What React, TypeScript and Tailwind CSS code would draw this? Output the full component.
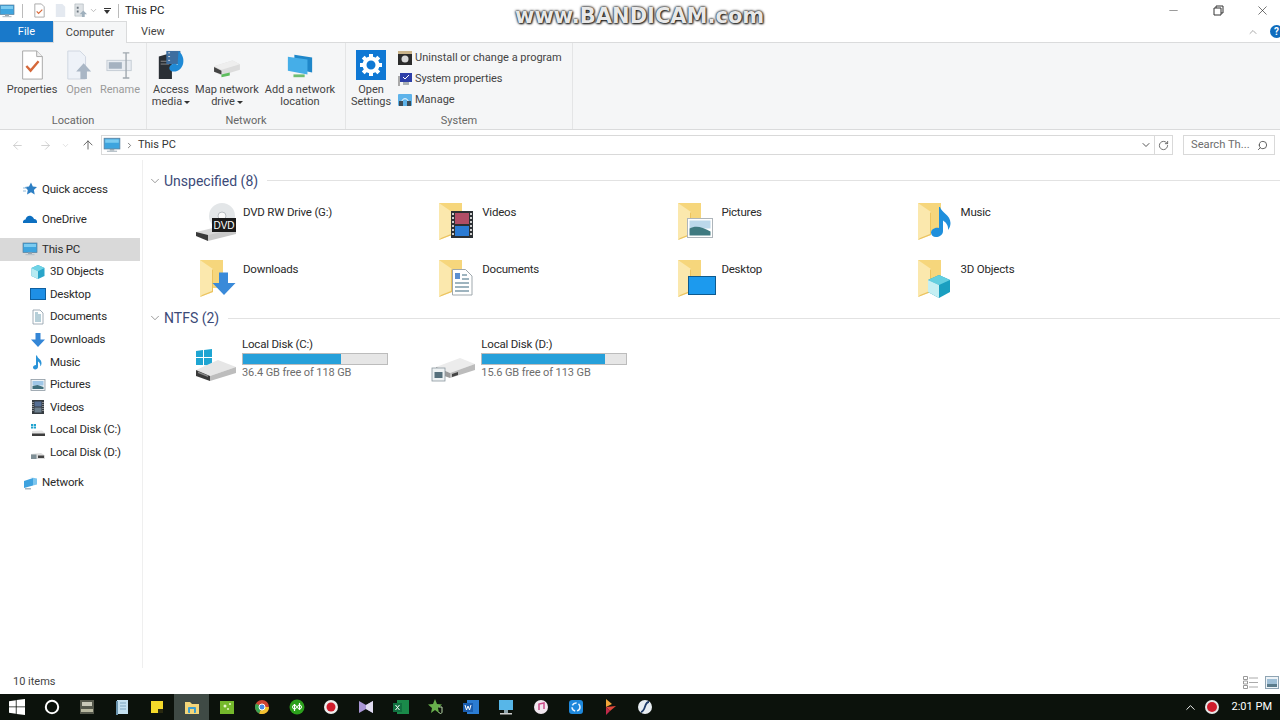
import type { ReactNode } from "react"
import { ArrowLeft, ArrowRight, ArrowUp, ChevronDown, ChevronRight, ChevronUp, RotateCw, Search, Minus, X } from "lucide-react"

const Ic = ({ s = 16, children, vb = 16 }: { s?: number; vb?: number; children: ReactNode }) => (
  <svg width={s} height={s} viewBox={`0 0 ${vb} ${vb}`} className="shrink-0 block">{children}</svg>
)

const Monitor = ({ s = 16 }: { s?: number }) => (
  <Ic s={s}>
    <rect x="1" y="2" width="14" height="9.5" fill="#3ea4de" stroke="#5a7f9c" strokeWidth=".7" />
    <rect x="2" y="3" width="12" height="3" fill="#7ccbf0" />
    <rect x="6" y="11.5" width="4" height="1.5" fill="#9aa7b0" />
    <rect x="3.5" y="13" width="9" height="1.2" fill="#b9c3ca" />
  </Ic>
)

const Cube = ({ s = 16 }: { s?: number }) => (
  <Ic s={s}>
    <path d="M8 1l6.500 3v8L8 15l-6.500-3V4z" fill="#2aa5c9" />
    <path d="M8 1l6.500 3L8 7.200 1.500 4z" fill="#6fd3e6" />
    <path d="M1.500 4L8 7.200V15l-6.500-3z" fill="#b5eaf2" />
  </Ic>
)

const DesktopIc = ({ s = 16 }: { s?: number }) => (
  <Ic s={s}>
    <rect x=".5" y="2.5" width="15" height="11" fill="#1e8fe6" stroke="#0f5f9f" />
  </Ic>
)

const DocIc = ({ s = 16 }: { s?: number }) => (
  <Ic s={s}>
    <path d="M3 1h7l3 3v11H3z" fill="#fff" stroke="#8a9aa6" strokeWidth=".8" />
    <path d="M5 4h3M5 6h6M5 8h6M5 10h6M5 12h6" stroke="#5c93a8" strokeWidth=".9" />
  </Ic>
)

const DownIc = ({ s = 16 }: { s?: number }) => (
  <Ic s={s}>
    <path d="M5.500 1h5v6.500H15L8 15 1 7.500h4.500z" fill="#3486d6" />
  </Ic>
)

const NoteIc = ({ s = 16 }: { s?: number }) => (
  <Ic s={s}>
    <path d="M7 1.500c.5 3 4.500 3.500 4.500 7.500 0 1.500-.5 2.500-1.200 3.300.3-3-1.300-4.300-2.300-4.800v5.500c0 1.600-1.500 2.500-2.800 2.500S3 14.600 3 13.300s1.400-2.300 3-2.300V1.500z" fill="#2a93d8" />
  </Ic>
)

const PicIc = ({ s = 16 }: { s?: number }) => (
  <Ic s={s}>
    <rect x="1" y="2.500" width="14" height="11" fill="#eef2f5" stroke="#8d99a3" strokeWidth=".8" />
    <rect x="2.500" y="4" width="11" height="4.500" fill="#9fc6e6" />
    <path d="M2.500 12V9l5-1 6 2v2z" fill="#3f6f7c" />
  </Ic>
)

const FilmIc = ({ s = 16 }: { s?: number }) => (
  <Ic s={s}>
    <rect x="2" y="1" width="12" height="14" fill="#353b40" />
    <rect x="4.500" y="2.500" width="7" height="5" fill="#566f94" />
    <rect x="4.500" y="8.500" width="7" height="5" fill="#6d7f8d" />
    <path d="M3 3v10M13 3v10" stroke="#d8d8d8" strokeWidth="1" strokeDasharray="1 1" />
  </Ic>
)

const DiskC = ({ s = 16 }: { s?: number }) => (
  <Ic s={s}>
    <path d="M1 2h2.200v2H1zM3.800 2H6v2H3.800zM1 4.600h2.200v2H1zM3.800 4.600H6v2H3.800z" fill="#21a3cf" />
    <path d="M2 9l10-.5 3 2.500v3H2z" fill="#e5e5e5" />
    <rect x="2" y="11.500" width="13" height="2.500" fill="#3d3d3d" />
  </Ic>
)

const DiskD = ({ s = 16 }: { s?: number }) => (
  <Ic s={s}>
    <path d="M1 9l10-1 4 2.500V14H1z" fill="#dcdcdc" />
    <rect x="8" y="10.500" width="6" height="2.500" fill="#444" />
    <rect x="1" y="9.500" width="5.500" height="4.500" fill="#7f8f96" />
  </Ic>
)

const NetIc = ({ s = 16 }: { s?: number }) => (
  <Ic s={s}>
    <path d="M2 6l9-3v7.500L2 13z" fill="#3ea2df" />
    <path d="M7 2l8 1.500v6L11 10.500V3z" fill="#7cc5ee" />
    <path d="M3 13h6v1.500H3z" fill="#a8b5bd" />
  </Ic>
)

const Folder = ({ children }: { children?: ReactNode }) => (
  <svg width="48" height="48" viewBox="0 0 48 48" className="shrink-0 block">
    <path d="M8 3h23v28H8z" fill="#f6d67c" />
    <path d="M8 3l13 9v23l-13 5z" fill="#fbe8ad" />
    <path d="M21 12v23l-13 5 2-2 10-4V13z" fill="#ecc35f" />
    {children}
  </svg>
)

const DvdDrive = () => (
  <svg width="48" height="48" viewBox="0 0 48 48" className="shrink-0 block">
    <circle cx="30" cy="16" r="13" fill="#e3e6e8" />
    <circle cx="30" cy="16" r="4" fill="#fafafa" stroke="#b8bdc1" />
    <path d="M4 32l34-8v9L16 40z" fill="#d8d8d8" />
    <path d="M4 32l12 3v6L4 36z" fill="#3a3a3a" />
    <path d="M16 35l28-6v5L16 41z" fill="#c8c8c8" />
    <rect x="20" y="18" width="24" height="14" fill="#1b1b1b" />
    <text x="32" y="29" textAnchor="middle" fontSize="10" fill="#fff" fontFamily="'Liberation Sans', sans-serif">DVD</text>
  </svg>
)

const DriveC = () => (
  <svg width="48" height="48" viewBox="0 0 48 48" className="shrink-0 block">
    <path d="M4 11l7-1v7H4zM12 10l8-1v8h-8zM4 18h7v7H4zM12 18h8v8l-8-1z" fill="#1ea5d2" />
    <path d="M4 30l22-10 18 7-26 9z" fill="#e6e6e6" />
    <path d="M4 30l14 6v5L4 36z" fill="#3a3a3a" />
    <path d="M6 31.500l10 4v1.500l-10-4z" fill="#8a8a8a" />
    <path d="M18 36l26-9v6L18 41z" fill="#bdbdbd" />
  </svg>
)

const DriveD = () => (
  <svg width="48" height="48" viewBox="0 0 48 48" className="shrink-0 block">
    <path d="M5 27l24-9 15 6-25 9z" fill="#ececec" />
    <path d="M5 27l14 6v5L5 33z" fill="#9b9b9b" />
    <path d="M19 33l25-9v6l-25 8z" fill="#bcbcbc" />
    <path d="M21 34l6-2v3l-6 2z" fill="#444" />
    <rect x="1" y="28" width="13" height="13" fill="#eef2f3" stroke="#8a979e" strokeWidth=".8" />
    <rect x="3.500" y="32" width="8" height="6" fill="#56707c" />
  </svg>
)

const Label = ({ name }: { name: string }) => (
  <span className="block pt-[3px] text-[11.5px] leading-[18px] tracking-[-0.2px] text-[#2a2a2a]">{name}</span>
)

const items: { name: string; icon: ReactNode }[] = [
  { name: "DVD RW Drive (G:)", icon: <DvdDrive /> },
  {
    name: "Videos",
    icon: (
      <Folder>
        <rect x="20" y="11" width="22" height="27" fill="#2c3034" />
        <rect x="24" y="13" width="14" height="11" fill="#b14d66" />
        <rect x="24" y="26" width="14" height="10" fill="#2b7bd4" />
        <path d="M22 13v23M40 13v23" stroke="#cfcfcf" strokeWidth="2" strokeDasharray="2 2" />
      </Folder>
    ),
  },
  {
    name: "Pictures",
    icon: (
      <Folder>
        <rect x="17.500" y="18.500" width="25" height="19" fill="#fff" stroke="#aeb5ba" />
        <rect x="19.500" y="20.500" width="21" height="8" fill="#bcd8ea" />
        <path d="M19.500 35.500v-7c6-3 12-2 21 3v4z" fill="#3f7a80" />
      </Folder>
    ),
  },
  {
    name: "Music",
    icon: (
      <Folder>
        <path d="M30 7c1 5 10.500 8 10.500 16 0 3-1 5-2.500 7 .5-5-2.500-8-5-9.500V31c0 4-4 6-7 6s-5-2-5-4.500 3.500-5.500 8-4.500V7z" fill="#1f8fdc" />
      </Folder>
    ),
  },
  {
    name: "Downloads",
    icon: (
      <Folder>
        <path d="M27 15.500h9V26h7.500L32 38 20.500 26H27z" fill="#3a8ad9" />
      </Folder>
    ),
  },
  {
    name: "Documents",
    icon: (
      <Folder>
        <path d="M21.500 12.500h13l6.500 6.500v19H21.500z" fill="#fff" stroke="#9fa8ad" />
        <path d="M24 16h5v6h-5z" fill="#5c8fd0" />
        <path d="M31 18h5M31 22h7M24 26h14M24 30h14M24 34h14" stroke="#7f9cab" strokeWidth="1.300" />
      </Folder>
    ),
  },
  {
    name: "Desktop",
    icon: (
      <Folder>
        <rect x="18.500" y="19.500" width="27" height="18" fill="#1c9aee" stroke="#0d5a8f" />
      </Folder>
    ),
  },
  {
    name: "3D Objects",
    icon: (
      <Folder>
        <path d="M29 18l11 5v12l-11 6-11-6V23z" fill="#1a9fc0" />
        <path d="M29 18l11 5-11 5-11-5z" fill="#63cfe0" />
        <path d="M18 23l11 5v13l-11-6z" fill="#c5eff3" />
      </Folder>
    ),
  },
]

const GroupHead = ({ title }: { title: string }) => (
  <div className="flex h-[20px] items-center pl-[5px]">
    <ChevronDown size={14} strokeWidth={1} className="text-[#555] shrink-0" />
    <span className="ml-[2px] text-[14px] leading-[20px] text-[#3c4a78]">{title}</span>
    <div className="ml-[9px] h-px flex-1 bg-[#e2e2e2]" />
  </div>
)

const Disk = ({ name, free, pct, icon }: { name: string; free: string; pct: number; icon: ReactNode }) => (
  <div className="flex w-[239.3px] items-start">
    <div className="mt-[5px]">{icon}</div>
    <div className="ml-[2px] w-[146px]">
      <div className="text-[11.5px] leading-[18px] tracking-[-0.2px] text-[#2a2a2a]">{name}</div>
      <div className="h-[12px] border border-[#bcbcbc] bg-[#e6e6e6]">
        <div className="h-full bg-[#26a0da]" style={{ width: `${pct}%` }} />
      </div>
      <div className="text-[11px] leading-[16px] tracking-[-0.1px] text-[#6d6d6d]">{free}</div>
    </div>
  </div>
)

const NavRow = ({ icon, name, sub, active, className = "" }: { icon: ReactNode; name: string; sub?: boolean; active?: boolean; className?: string }) => (
  <div className={`flex h-[22.6px] items-center ${sub ? "pl-[30px]" : "pl-[22px]"} ${active ? "bg-[#d9d9d9]" : ""} ${className}`}>
    {icon}
    <span className="ml-[4px] text-[11.5px] tracking-[-0.2px] text-[#2a2a2a]">{name}</span>
  </div>
)

const RibbonBtn = ({ icon, lines, w, off, caret }: { icon: ReactNode; lines: string[]; w: string; off?: boolean; caret?: boolean }) => (
  <div className={`flex flex-col items-center ${w}`}>
    <div className="flex h-[30px] items-end justify-center">{icon}</div>
    <div className={`mt-[4px] text-center text-[11px] leading-[12px] ${off ? "text-[#9a9a9a]" : "text-[#444]"}`}>
      {lines.map((l, i) => (
        <div key={l} className="whitespace-nowrap">
          {l}
          {caret && i === lines.length - 1 && <span className="ml-[2px] inline-block h-0 w-0 border-x-[3px] border-t-[3px] border-x-transparent border-t-[#333] align-middle" />}
        </div>
      ))}
    </div>
  </div>
)

const GroupLabel = ({ text }: { text: string }) => (
  <div className="absolute inset-x-0 bottom-[1px] text-center text-[11px] leading-[14px] text-[#666]">{text}</div>
)

const TaskIc = ({ children, active }: { children: ReactNode; active?: boolean }) => (
  <div className={`flex h-full w-[34.9px] items-center justify-center ${active ? "bg-[#3f4a45]" : ""}`}>{children}</div>
)

const T = ({ children }: { children: ReactNode }) => <Ic s={18} vb={18}>{children}</Ic>

export default function App() {
  return (
    <div className="relative flex h-[720px] w-[1280px] flex-col overflow-hidden bg-white font-['Roboto','Liberation_Sans',sans-serif]">
      {/* title bar */}
      <div className="flex h-[21px] items-center">
        <div className="-ml-[1px]"><Monitor /></div>
        <div className="ml-[7px] h-[14px] w-px bg-[#bbb]" />
        <div className="ml-[9px]">
          <Ic s={15}>
            <path d="M3 1h7l3 3v11H3z" fill="#fff" stroke="#a9a9a9" />
            <path d="M5 9l2 2 4-4" fill="none" stroke="#d96a3a" strokeWidth="1.300" />
          </Ic>
        </div>
        <div className="ml-[6px]">
          <Ic s={15}><path d="M3 1h7l3 3v11H3z" fill="#e4e9f0" /></Ic>
        </div>
        <div className="ml-[5px]">
          <Ic s={15}>
            <path d="M2 1h9v13H2z" fill="#dfe3e6" stroke="#a8b0b6" strokeWidth=".6" />
            <path d="M4 4h2v2H4zM4 8h2v2H4z" fill="#6d7780" />
            <path d="M11 8l4 4h-2.500v3h-3v-3H7z" fill="#9fb0bd" />
          </Ic>
        </div>
        <ChevronDown size={9} className="ml-[1px] text-[#aaa]" />
        <div className="ml-[5px] flex w-[8px] flex-col items-center">
          <div className="mb-[1px] h-px w-[7px] bg-[#333]" />
          <div className="h-0 w-0 border-x-[3.5px] border-t-[4px] border-x-transparent border-t-[#333]" />
        </div>
        <div className="ml-[7px] h-[14px] w-px bg-[#bbb]" />
        <span className="ml-[6px] text-[11.5px] text-[#222]">This PC</span>
        <div className="ml-auto flex items-center">
          <Minus size={13} strokeWidth={1} className="mr-[33px] text-[#444]" />
          <svg width="11" height="11" viewBox="0 0 11 11" className="mr-[31px]">
            <path d="M3 3V1h7v7H8M1 3h7v7H1z" fill="none" stroke="#333" />
          </svg>
          <X size={15} strokeWidth={1} className="mr-[10px] text-[#222]" />
        </div>
      </div>

      {/* tabs */}
      <div className="flex h-[22px] items-stretch border-b border-[#dadbdc]">
        <div className="flex w-[53px] items-center justify-center bg-[#1979ca] pt-[1px] text-[11px] text-white">File</div>
        <div className="-mb-px flex w-[74px] items-center justify-center border-x border-t border-[#dadbdc] bg-[#f5f6f7] pt-[1px] text-[11px] text-[#444]">Computer</div>
        <div className="flex w-[52px] items-center justify-center pt-[1px] text-[11px] text-[#444]">View</div>
        <div className="ml-auto flex items-center">
          <ChevronUp size={12} className="mr-[11px] text-[#aaa]" />
          <div className="-mr-[3px] flex h-[13px] w-[13px] items-center justify-center rounded-full bg-[#0f6cbd] text-[10px] font-bold leading-none text-white">?</div>
        </div>
      </div>

      {/* ribbon */}
      <div className="flex h-[87px] border-b border-[#dadbdc] bg-[#f5f6f7]">
        <div className="relative flex w-[147px] border-r border-[#e4e5e6] pl-[6px] pt-[7px]">
          <RibbonBtn
            w="w-[52px]"
            lines={["Properties"]}
            icon={
              <svg width="30" height="30" viewBox="0 0 32 32">
                <path d="M6 1h15l6 6v24H6z" fill="#fff" stroke="#a5a5a5" />
                <path d="M21 1v6h6" fill="#eee" stroke="#a5a5a5" />
                <path d="M10 17l4.500 5L23 12" fill="none" stroke="#d5683a" strokeWidth="2.500" />
              </svg>
            }
          />
          <RibbonBtn
            w="w-[42px]"
            off
            lines={["Open"]}
            icon={
              <svg width="28" height="30" viewBox="0 0 30 32">
                <path d="M3 1h13l6 6v24H3z" fill="#eef2f8" stroke="#cdd5e0" />
                <path d="M20 14l8 9h-4.500v8h-7v-8H12z" fill="#a9b6c5" />
              </svg>
            }
          />
          <RibbonBtn
            w="w-[40px]"
            off
            lines={["Rename"]}
            icon={
              <svg width="28" height="30" viewBox="0 0 30 32">
                <rect x="1" y="11" width="26" height="11" fill="#e9edf2" stroke="#c4ccd4" />
                <rect x="3" y="13" width="14" height="7" fill="#a5b2c0" />
                <path d="M18 3h7M18 30h7M21.500 3v27" stroke="#a0a8af" strokeWidth="1.500" fill="none" />
              </svg>
            }
          />
          <GroupLabel text="Location" />
        </div>
        <div className="relative flex w-[199px] border-r border-[#e4e5e6] pl-[2px] pt-[7px]">
          <RibbonBtn
            w="w-[44px]"
            caret
            lines={["Access", "media"]}
            icon={
              <svg width="32" height="30" viewBox="0 0 32 32">
                <path d="M3 7l14-4v28H3z" fill="#2a2f35" />
                <path d="M5 12h9M5 15h9" stroke="#8d8d8d" />
                <rect x="11" y="1" width="15" height="14" fill="#3d6ea0" />
                <path d="M13 3h2M13 7h2M13 11h2" stroke="#ddd" />
                <path d="M24 1c4 3 6 8 5 13-1 5-5 9-10 9-4 0-6-3-4-6s6-3 8-1z" fill="#1f8ad6" />
              </svg>
            }
          />
          <RibbonBtn
            w="w-[68px]"
            caret
            lines={["Map network", "drive"]}
            icon={
              <svg width="32" height="24" viewBox="0 0 32 26">
                <path d="M2 11l20-6 8 4v6L10 21 2 17z" fill="#dcdcdc" />
                <path d="M2 11l8 4 20-6-8-4z" fill="#eee" />
                <path d="M2 12l8 4v4l-8-3z" fill="#444" />
                <path d="M10 20l9-2v3l-9 2z" fill="#5ebd5e" />
              </svg>
            }
          />
          <RibbonBtn
            w="w-[78px]"
            lines={["Add a network", "location"]}
            icon={
              <svg width="30" height="28" viewBox="0 0 30 30">
                <path d="M9 3l19 3v16L9 18z" fill="#1f87c9" />
                <path d="M2 5l21 3v16L2 20z" fill="#45aee8" />
                <path d="M8 24h12v3H8z" fill="#6fbe72" />
              </svg>
            }
          />
          <GroupLabel text="Network" />
        </div>
        <div className="relative flex w-[227px] border-r border-[#e4e5e6] pt-[7px]">
          <RibbonBtn
            w="w-[50px]"
            lines={["Open", "Settings"]}
            icon={
              <svg width="30" height="30" viewBox="0 0 30 30">
                <rect width="30" height="30" fill="#0f78d4" />
                <circle cx="15" cy="15" r="6.500" fill="none" stroke="#fff" strokeWidth="4" />
                <path d="M15 4v4M15 22v4M4 15h4M22 15h4M7.200 7.200l2.800 2.800M20 20l2.800 2.800M22.800 7.200L20 10M10 20l-2.800 2.800" stroke="#fff" strokeWidth="4" />
              </svg>
            }
          />
          <div className="ml-[1px] flex flex-col gap-[5px]">
            <div className="flex h-[16px] items-center">
              <Ic>
                <rect x="1" y="2" width="14" height="13" fill="#2b2b2b" />
                <rect x="1" y="1" width="14" height="3" fill="#c9b38a" />
                <circle cx="8" cy="9" r="3.500" fill="#d8d8d8" />
              </Ic>
              <span className="ml-[2px] whitespace-nowrap text-[11px] text-[#444]">Uninstall or change a program</span>
            </div>
            <div className="flex h-[16px] items-center">
              <Ic>
                <rect x="3" y="2" width="12" height="9" fill="#2d3fa8" />
                <path d="M6 6l2 2 4-4" stroke="#fff" fill="none" />
                <rect x="1" y="5" width="2" height="10" fill="#a9a9a9" />
                <rect x="6" y="11" width="6" height="3" fill="#a9b0b5" />
              </Ic>
              <span className="ml-[2px] whitespace-nowrap text-[11px] tracking-[-0.1px] text-[#444]">System properties</span>
            </div>
            <div className="flex h-[16px] items-center">
              <Ic>
                <rect x="1" y="2" width="14" height="12" rx="1" fill="#5eb3ea" />
                <rect x="2" y="9" width="4" height="5" fill="#3e4d58" />
                <rect x="10" y="9" width="4" height="5" fill="#3e4d58" />
                <path d="M5 9c0-3 6-3 6 0" fill="none" stroke="#fff" />
              </Ic>
              <span className="ml-[2px] whitespace-nowrap text-[11px] text-[#444]">Manage</span>
            </div>
          </div>
          <GroupLabel text="System" />
        </div>
      </div>

      {/* address row */}
      <div className="flex h-[30px] items-center">
        <ArrowLeft size={13} strokeWidth={1.5} className="ml-[11px] text-[#c8c8c8]" />
        <ArrowRight size={13} strokeWidth={1.5} className="ml-[15px] text-[#c8c8c8]" />
        <ChevronDown size={9} strokeWidth={1.5} className="ml-[9px] text-[#ccc]" />
        <ArrowUp size={14} strokeWidth={1.5} className="ml-[11px] text-[#555]" />
        <div className="ml-[6px] flex h-[20px] w-[1072px] items-center border border-[#d9d9d9] pl-[1px]">
          <Monitor s={18} />
          <ChevronRight size={9} className="ml-[4px] text-[#555]" />
          <span className="ml-[4px] pt-[1px] text-[11px] text-[#333]">This PC</span>
          <ChevronDown size={12} strokeWidth={2} className="ml-auto mr-[1px] text-[#555]" />
          <div className="ml-[1px] h-full w-px bg-[#d9d9d9]" />
          <RotateCw size={11} className="mx-[3px] text-[#666]" />
        </div>
        <div className="ml-[10px] flex h-[20px] w-[92px] items-center border border-[#d9d9d9] pl-[7px]">
          <span className="pt-[1px] text-[11.2px] text-[#6d6d6d]">Search Th...</span>
          <Search size={11} className="ml-auto mr-[6px] -scale-x-100 text-[#555]" />
        </div>
      </div>

      {/* body */}
      <div className="flex h-[508px]">
        <div className="w-[143px] border-r border-[#efefef] pr-[2px] pt-[18px]">
          <NavRow
            name="Quick access"
            icon={
              <Ic s={16}>
                <path d="M9 1.500l1.800 4 4.200.5-3.100 3 .8 4.500L9 11.200 5 13.500l.8-4.500-3-3 4.200-.5z" fill="#2d7fc4" />
                <path d="M1 7h4M1 10h3" stroke="#8fb8d9" />
              </Ic>
            }
          />
          <NavRow
            className="mt-[7.400px]"
            name="OneDrive"
            icon={
              <Ic s={16}>
                <path d="M1 12c-.5-2 1-3.500 2.500-3.500C4 6 6.500 4 9 5c1.500.5 2.500 1.500 3 3 2 0 3.500 1.500 3 4z" fill="#0d6fc0" />
              </Ic>
            }
          />
          <NavRow className="mt-[7.400px]" active name="This PC" icon={<Monitor />} />
          <NavRow sub name="3D Objects" icon={<Cube />} />
          <NavRow sub name="Desktop" icon={<DesktopIc />} />
          <NavRow sub name="Documents" icon={<DocIc />} />
          <NavRow sub name="Downloads" icon={<DownIc />} />
          <NavRow sub name="Music" icon={<NoteIc />} />
          <NavRow sub name="Pictures" icon={<PicIc />} />
          <NavRow sub name="Videos" icon={<FilmIc />} />
          <NavRow sub name="Local Disk (C:)" icon={<DiskC />} />
          <NavRow sub name="Local Disk (D:)" icon={<DiskD />} />
          <NavRow className="mt-[7.400px]" name="Network" icon={<NetIc />} />
        </div>
        <div className="flex-1 pt-[10.500px]">
          <GroupHead title="Unspecified (8)" />
          <div className="mt-[9.500px] grid grid-cols-[repeat(4,239.2px)] gap-y-[5px] pl-[49px]">
            {items.map((it) => (
              <div key={it.name} className="flex h-[51.500px] items-start">
                {it.icon}
                <div className="ml-[3px]"><Label name={it.name} /></div>
              </div>
            ))}
          </div>
          <GroupHead title="NTFS (2)" />
          <div className="mt-[7px] flex pl-[49px]">
            <Disk name="Local Disk (C:)" free="36.4 GB free of 118 GB" pct={68} icon={<DriveC />} />
            <Disk name="Local Disk (D:)" free="15.6 GB free of 113 GB" pct={85} icon={<DriveD />} />
          </div>
        </div>
      </div>

      {/* status */}
      <div className="flex h-[26px] items-center bg-white pl-[13px] pt-[3px]">
        <span className="text-[11px] text-[#444]">10 items</span>
        <div className="ml-auto flex items-center">
          <svg width="15" height="13" viewBox="0 0 15 13" className="mr-[7px]">
            <path d="M.5.500h4v3h-4zM.5 5h4v3h-4zM.5 9.500h4v3h-4z" fill="none" stroke="#999" />
            <path d="M6 2h9M6 6.500h9M6 11h9" stroke="#aaa" />
          </svg>
          <svg width="14" height="13" viewBox="0 0 14 13" className="mr-[1px]">
            <rect x=".5" y=".5" width="13" height="12" fill="#eef3f7" stroke="#8fa4b3" />
            <rect x="2" y="3" width="10" height="5" fill="#9fbfd6" />
            <rect x="2" y="8" width="10" height="3" fill="#5c7c8c" />
          </svg>
        </div>
      </div>

      {/* taskbar */}
      <div className="flex h-[26px] items-center bg-[#0c120c]">
        <TaskIc>
          <svg width="16" height="16" viewBox="0 0 16 16"><path d="M0 2.200l6.800-1V7.500H0zM7.600 1L16 0v7.500H7.600zM0 8.300h6.800v6.500L0 13.800zM7.600 8.300H16V16l-8.400-1.100z" fill="#fff" /></svg>
        </TaskIc>
        <TaskIc>
          <svg width="16" height="16" viewBox="0 0 16 16"><circle cx="8" cy="8" r="6.200" fill="none" stroke="#fff" strokeWidth="2" /></svg>
        </TaskIc>
        <TaskIc><T><rect x="2" y="2" width="14" height="14" fill="#55584c" /><rect x="4" y="4" width="10" height="4" fill="#c8c8b8" /><rect x="3" y="11" width="12" height="3" fill="#b8b8a0" /></T></TaskIc>
        <TaskIc><T><path d="M4 2h11v14H4z" fill="#c4e0f0" /><path d="M3 3h2v14H3z" fill="#6a93ad" /><path d="M7 5h6M7 8h6M7 11h6" stroke="#7fa6c0" /></T></TaskIc>
        <TaskIc><T><rect x="3" y="3" width="12" height="12" fill="#f4d92a" /><path d="M15 15h-5v-4h5z" fill="#2a2a10" /></T></TaskIc>
        <TaskIc active><T><path d="M2 4h5l2 2h7v10H2z" fill="#f3d579" /><rect x="5" y="9" width="8" height="6" rx="1" fill="#3e9fcf" /><rect x="7" y="11" width="4" height="4" fill="#f3d579" /></T></TaskIc>
        <TaskIc><T><rect x="2" y="3" width="14" height="13" fill="#75b82c" /><circle cx="7" cy="8" r="1.500" fill="#e6f5c9" /><circle cx="12" cy="6" r="1" fill="#e6f5c9" /><circle cx="10" cy="11" r="1" fill="#e6f5c9" /></T></TaskIc>
        <TaskIc><T><circle cx="9" cy="9" r="7" fill="#cf4434" /><path d="M9 9L16 9A7 7 0 0 1 6 15.400z" fill="#f2c230" /><path d="M9 9L6 15.400A7 7 0 0 1 3 5.500z" fill="#3ba551" /><circle cx="9" cy="9" r="3" fill="#4b8be8" stroke="#fff" /></T></TaskIc>
        <TaskIc><T><circle cx="9" cy="9" r="7.500" fill="#2ca01c" /><path d="M6.500 6v7M11.500 5v7" stroke="#fff" strokeWidth="1.200" /><circle cx="6.500" cy="9" r="2" fill="none" stroke="#fff" /><circle cx="11.500" cy="9" r="2" fill="none" stroke="#fff" /></T></TaskIc>
        <TaskIc><T><circle cx="9" cy="9" r="7" fill="#eee" /><circle cx="9" cy="9" r="4.500" fill="#d01c2c" /></T></TaskIc>
        <TaskIc><T><path d="M2 3l7 4 7-4v12l-7-4-7 4z" fill="#a996d6" /><path d="M9 7l7-4v12l-7-4z" fill="#e0dcf0" /></T></TaskIc>
        <TaskIc><T><rect x="5" y="2" width="12" height="14" fill="#1a8a4a" /><rect x="1" y="5" width="9" height="9" fill="#117040" /><path d="M3.500 7l4 5M7.500 7l-4 5" stroke="#fff" /></T></TaskIc>
        <TaskIc><T><path d="M8 1l2 5 5 .5-4 3.500 1 5-4-3-4 3 1-5-4-3.500 5-.5z" fill="#68b04c" /><path d="M12 9h3v5c0 2-3 2-3 0" fill="none" stroke="#b8d8a8" /></T></TaskIc>
        <TaskIc><T><rect x="5" y="2" width="12" height="14" fill="#2b7cd3" /><rect x="1" y="5" width="10" height="9" fill="#1a5cae" /><path d="M3 7l1.500 5L6 8l1.500 4L9 7" stroke="#fff" fill="none" /></T></TaskIc>
        <TaskIc><T><rect x="2" y="2" width="14" height="10" fill="#57b6e8" /><rect x="7" y="12" width="4" height="3" fill="#8fa4ad" /><rect x="3" y="15" width="12" height="1.500" fill="#ccc" /></T></TaskIc>
        <TaskIc><T><circle cx="9" cy="9" r="7" fill="#f1e7ef" /><path d="M7 12V6l5-1v6" fill="none" stroke="#c94a86" strokeWidth="1.500" /></T></TaskIc>
        <TaskIc><T><rect x="2" y="2" width="14" height="14" rx="3" fill="#1e88dc" /><circle cx="9" cy="9" r="4" fill="none" stroke="#e8f4ff" strokeWidth="1.500" strokeDasharray="5 2" /></T></TaskIc>
        <TaskIc><T><path d="M4 1l6 5-6 3z" fill="#f2a63a" /><path d="M4 9l10-1-6 5z" fill="#e0483c" /><path d="M4 9l4 4-4 4z" fill="#c02a4a" /></T></TaskIc>
        <TaskIc><T><circle cx="9" cy="9" r="7" fill="#e8edf2" /><path d="M13 4C8 4 10 13 5 14" fill="none" stroke="#1e3a68" strokeWidth="1.800" /></T></TaskIc>
        <div className="ml-auto flex items-center">
          <ChevronUp size={15} strokeWidth={1.5} className="mr-[6px] text-white" />
          <svg width="16" height="16" viewBox="0 0 16 16" className="mr-[12px]">
            <circle cx="8" cy="8" r="7" fill="#e6e6e6" />
            <circle cx="8" cy="8" r="5" fill="#d01c2c" />
          </svg>
          <span className="mr-[8px] text-[11px] text-white">2:01 PM</span>
        </div>
      </div>

      {/* recorder watermark */}
      <div className="absolute left-[515px] top-[4px] font-['DejaVu_Sans',sans-serif] text-[21px] font-bold leading-[24px] text-[#e8e8e8] [text-shadow:0_0_2px_#111,0_0_3px_#222,1px_1px_2px_#333]">
        www.BANDICAM.com
      </div>
    </div>
  )
}
